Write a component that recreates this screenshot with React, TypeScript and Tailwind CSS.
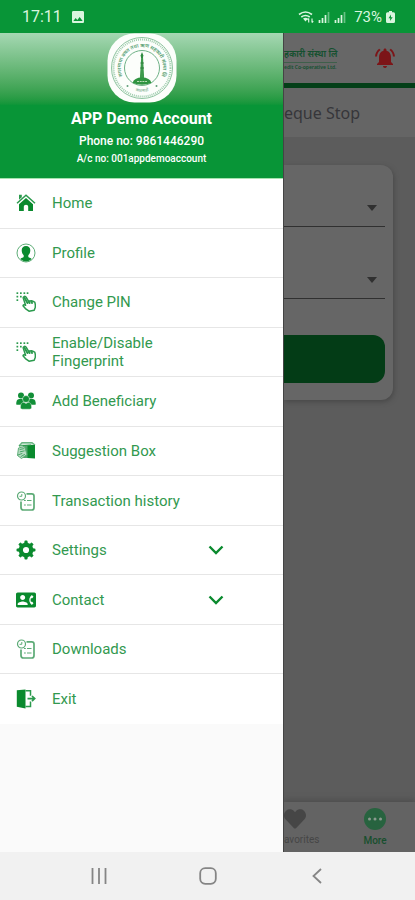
import React from 'react'
import { FaHeart } from 'react-icons/fa'
import { MdContactPhone, MdNotificationsActive, MdImage } from 'react-icons/md'

interface MenuItem {
  label: string
  icon: React.ReactNode
  expandable?: boolean
}

function HomeIcon() {
  return (
    <svg viewBox="0 0 20 20" className="size-5" fill="none">
      <path d="M1 10.200L10 2.200l9 8" stroke="#2b9a4d" strokeWidth="1.500" />
      <path d="M3 1.800h2.800v2.400L3 6.800z" fill="#2b9a4d" />
      <path d="M10 5l7 6.200V18h-4.800v-4.500q0-1.800-2.200-1.800t-2.200 1.800V18H3v-6.800z" fill="#0a8a2e" />
    </svg>
  )
}

function ProfileIcon() {
  return (
    <svg viewBox="0 0 20 20" className="size-5" fill="none">
      <circle cx="10" cy="10" r="9" stroke="#5fae78" strokeWidth="1" />
      <path
        d="M10 3c2.700 0 4.300 1.600 4.300 4.300 0 2-.8 4-2 5v1.400c.3 1 2.600 1.200 3.400 2.300A8.600 8.600 0 0 1 10 18.600a8.600 8.600 0 0 1-5.700-2.600c.8-1.100 3.100-1.300 3.400-2.300v-1.400c-1.200-1-2-3-2-5C5.700 4.600 7.300 3 10 3z"
        fill="#0a8a2e"
      />
    </svg>
  )
}

function PinIcon() {
  return (
    <svg viewBox="0 0 20 20" className="size-5" fill="none">
      {[1, 4.5, 8].map((y) =>
        [1.2, 4.7, 8.2, 11.4].map((x) =>
          (x > 8 && y > 4) || (x > 4 && y > 7) ? null : (
            <rect key={`${x}-${y}`} x={x - 0.7} y={y - 0.7} width="1.700" height="1.700" fill="#2b9a4d" />
          )
        )
      )}
      <path
        d="M8 4.600c.8-.5 1.700-.2 2.100.5l2.500 4.200 1.200-.4 1.600-.1 1.400.5 1.900.8c.7 2 .9 3.900.4 5.600l-.9 2.500-5.200 1-3.600-2.600-2.400-2.800c.2-1.100 1.400-1.300 2.600-.5L7.300 6.200c-.2-.7 0-1.300.7-1.600z"
        stroke="#2b9a4d"
        strokeWidth="1.500"
        strokeLinejoin="round"
      />
      <path d="M8.300 5.500l3.200 5.500M13 9.500l.6 1.500M15.500 9.500l.5 1.500" stroke="#2b9a4d" strokeWidth="2" strokeLinecap="round" />
    </svg>
  )
}

function PeopleIcon() {
  return (
    <svg viewBox="0 0 20 20" className="size-5" fill="#128f38">
      <circle cx="5" cy="4.500" r="3" />
      <circle cx="15" cy="4.500" r="3" />
      <path d="M.2 13.400C.2 10.200 1 8 3.200 8h3.400l1.600 2.500-2.900 3.300H1.200zM19.800 13.400c0-3.200-.8-5.400-3-5.400h-3.400l-1.600 2.500 2.900 3.300h4.100z" />
      <circle cx="10" cy="8" r="3.500" stroke="#fff" strokeWidth=".5" />
      <path d="M4.400 16.200c0-3.200 1.200-4.900 3.600-4.900l2 1.300 2-1.300c2.400 0 3.600 1.700 3.600 4.900 0 1.300-.7 2-2 2H6.400c-1.300 0-2-.7-2-2z" stroke="#fff" strokeWidth=".4" />
    </svg>
  )
}

function SuggestionIcon() {
  return (
    <svg viewBox="0 0 20 20" className="size-5" fill="none">
      <path d="M3 5l3-3.300h10L19 4" stroke="#6ab583" strokeWidth="1.400" fill="#cfe8d6" />
      <path d="M7 4h8v13H7z" fill="#4ea56a" />
      <path d="M11.500 4H19v13.500l-7.500-.5z" fill="#0a8a2e" />
      <path d="M3 5l12-1" stroke="#2b9a4d" strokeWidth="1.200" />
      <path d="M2.500 7l6-1.500 2.500 8-5.500 4-4-3z" fill="#b9ddc4" stroke="#5fae78" strokeWidth="1" strokeLinejoin="round" />
      <path d="M4 8.500l3.500-.8M4.200 10.800l4-.9M2 14l4-1.500M5 15.500l3.500-2" stroke="#3b9e5b" strokeWidth=".9" strokeLinecap="round" />
    </svg>
  )
}

function HistoryIcon() {
  return (
    <svg viewBox="0 0 20 20" className="size-5" fill="none" stroke="#5cab76">
      <circle cx="5.500" cy="5" r="4" strokeWidth="1.200" />
      <path d="M5.800 3v2.300H3.500" strokeWidth="1" />
      <path d="M10.500 2.800h5.200q2.300 0 2.300 2.300v11.400q0 2.500-2.300 2.500H7.500Q5 19 5 16.500v-6" strokeWidth="1.700" />
      <path d="M8 9.500h1.800M11 9.500h4.500M8 14h1.800M11 14h4.500" strokeWidth="1.200" />
    </svg>
  )
}

function GearIcon() {
  return (
    <svg viewBox="0 0 20 20" className="size-5" fill="none" stroke="#0a8a2e">
      <circle cx="10" cy="10" r="5.200" strokeWidth="4.200" />
      {[0, 45, 90, 135, 180, 225, 270, 315].map((angle) => (
        <path key={angle} d="M8.200 3.500L8.900.8h2.200l.7 2.700z" fill="#0a8a2e" strokeWidth=".4" transform={`rotate(${angle} 10 10)`} />
      ))}
    </svg>
  )
}

function ExitIcon() {
  return (
    <svg viewBox="0 0 20 20" className="size-5" fill="none">
      <path d="M.800 1.200L9.500.6v19L.8 17.800z" fill="#0a8a2e" />
      <path d="M9.500 1.800h5v5M9.500 17.500h5v-5" stroke="#2b9a4d" strokeWidth="1.500" />
      <path d="M11.500 9.600h6.500M16 7l2.700 2.600L16 12.200" stroke="#2b9a4d" strokeWidth="1.700" />
    </svg>
  )
}

function Chevron() {
  return (
    <svg viewBox="0 0 16 10" className="h-[10px] w-4" fill="none">
      <path d="M1.500 1.500L8 8l6.500-6.500" stroke="#0a8a2e" strokeWidth="2.400" />
    </svg>
  )
}

function Logo() {
  return (
    <svg viewBox="0 0 70 70" className="size-[70px]" fill="none" role="img" aria-label="Bank logo">
      <rect x="0.500" y="0.500" width="69" height="69" rx="27" fill="#fcfefb" />
      <circle cx="35" cy="35" r="30.500" stroke="#8fc4a0" strokeWidth="1" />
      <circle cx="35" cy="35" r="28.500" stroke="#9fcdae" strokeWidth="2" strokeDasharray="1 1" />
      <circle cx="35" cy="35" r="17.500" stroke="#6fb287" strokeWidth="1" />
      <defs>
        <path id="ring" d="M18.500 48A21 21 0 1 1 51.500 48" />
        <path id="ringBottom" d="M20 54A25.500 25.500 0 0 0 50 54" />
      </defs>
      <text fontSize="5" fontWeight="600" fill="#4f9a6c" className="font-['Noto_Sans',sans-serif]">
        <textPath href="#ring" startOffset="50%" textAnchor="middle">
          सगरमाथा बचत तथा ऋण सहकारी संस्था लि
        </textPath>
      </text>
      <text fontSize="4" fill="#5f9f78" className="font-['Noto_Sans',sans-serif]">
        <textPath href="#ringBottom" startOffset="50%" textAnchor="middle">
          काठमाडौं
        </textPath>
      </text>
      <circle cx="20.500" cy="53" r="1" fill="#5f9f78" />
      <circle cx="49.500" cy="53" r="1" fill="#5f9f78" />
      <path d="M34.200 24h1.800l1.200 22h-4.400z" fill="#3d9a4c" />
      <path d="M35 19l1.400 3.500-.6 2.500h-1.600l-.6-2.500z" fill="#2e8b40" />
      <path d="M33.500 30h3.300M33.300 35h3.700" stroke="#2e7d3b" strokeWidth="1" />
      <path d="M25.500 50q1.500-5.500 9.500-5.500t9.500 5.500q-9.500 3.500-19 0z" fill="#2f9440" />
      <path d="M30 48.500h10" stroke="#b9ddb4" strokeWidth="1" strokeDasharray="2 .7" />
    </svg>
  )
}

const menuItems: MenuItem[] = [
  { label: 'Home', icon: <HomeIcon /> },
  { label: 'Profile', icon: <ProfileIcon /> },
  { label: 'Change PIN', icon: <PinIcon /> },
  { label: 'Enable/Disable Fingerprint', icon: <PinIcon /> },
  { label: 'Add Beneficiary', icon: <PeopleIcon /> },
  { label: 'Suggestion Box', icon: <SuggestionIcon /> },
  { label: 'Transaction history', icon: <HistoryIcon /> },
  { label: 'Settings', icon: <GearIcon />, expandable: true },
  { label: 'Contact', icon: <MdContactPhone className="size-5" />, expandable: true },
  { label: 'Downloads', icon: <HistoryIcon /> },
  { label: 'Exit', icon: <ExitIcon /> },
]

function StatusBar() {
  return (
    <div className="flex h-[33px] items-center justify-between bg-[#089537] pr-5 pl-[22px] text-[#d9f5df]">
      <div className="flex items-center gap-2">
        <span className="text-base leading-5">17:11</span>
        <MdImage className="size-4" />
      </div>
      <div className="flex items-center gap-1">
        <svg viewBox="0 0 16 14" className="h-[14px] w-4" fill="none" stroke="currentColor">
          <path d="M1 4.500q6.500-5 13 0M3.300 7q4.200-3 8.400 0" strokeWidth="1.600" />
          <path d="M5 8.500q2.500-1.500 5 0L7.500 11.500z" fill="currentColor" stroke="none" />
          <path d="M10.700 12.500V8.500M9.500 9.800l1.200-1.500M14 8.500v4M15.200 11.200L14 12.700" strokeWidth="1.200" />
        </svg>
        {[0, 1].map((i) => (
          <svg key={i} viewBox="0 0 12 12" className="size-3" stroke="currentColor" strokeWidth="1.700">
            <path d="M1.500 12V9M4.500 12V7M7.500 12V4" />
            <path d="M10.500 12V1" opacity=".45" />
          </svg>
        ))}
        <span className="ml-1 text-[15px] leading-5">73%</span>
        <svg viewBox="0 0 9 12" className="h-3 w-[9px]">
          <path d="M3 0h3v1.300h1.500Q9 1.300 9 2.800v7.700Q9 12 7.500 12h-6Q0 12 0 10.500V2.800q0-1.500 1.500-1.500H3z" fill="currentColor" />
          <path d="M5 3.500L2.500 7.300h1.700L4 10l2.700-3.800H5z" fill="#089537" />
        </svg>
      </div>
    </div>
  )
}

function Drawer() {
  return (
    <aside className="flex w-[283px] shrink-0 flex-col bg-[#fafafa]">
      <header className="flex h-[146px] flex-col items-center border-b border-[#a5e3ae] bg-linear-to-b from-[#a5d8b3] to-[#089537] to-50% text-white">
        <Logo />
        <h1 className="mt-1 text-base leading-6 font-bold">APP Demo Account</h1>
        <p className="text-xs leading-5 font-medium">Phone no: 9861446290</p>
        <p className="text-[10px] leading-4 font-medium">A/c no: 001appdemoaccount</p>
      </header>
      <ul className="grid h-[545px] auto-rows-fr bg-white">
        {menuItems.map((item) => (
          <li key={item.label} className="flex border-b border-[#e6e6e6] last:border-b-0">
            <button type="button" className="flex w-full items-center pl-4 text-left text-[#0a8a2e]">
              <span className="mr-4 size-5 shrink-0">{item.icon}</span>
              <span className="w-[150px] text-[15px] leading-[18px] text-[#32994f]">{item.label}</span>
              {item.expandable && (
                <span className="ml-1.5">
                  <Chevron />
                </span>
              )}
            </button>
          </li>
        ))}
      </ul>
    </aside>
  )
}

function AccountSelect({ label }: { label: string }) {
  return (
    <div className="flex h-[38px] items-center border-b border-[#303030]">
      <select aria-label={label} className="min-w-0 flex-1 appearance-none bg-transparent" />
      <svg viewBox="0 0 10 6" className="mr-2 h-[6px] w-[10px]">
        <path d="M0 0h10L5 6z" fill="#303030" />
      </svg>
    </div>
  )
}

// page under the drawer, shown in its dimmed colours
function DimmedPage() {
  return (
    <main className="flex min-w-0 flex-1 flex-col overflow-hidden border-l border-[#444444] bg-[#5c5c5c]">
      <div className="flex h-[55px] items-center justify-between border-b-[5px] border-[#043f18] bg-[#676767] pr-[18px]">
        <div className="font-['Noto_Sans',sans-serif] font-semibold text-[#14502f]">
          <p className="border-b border-[#3f5f4b] text-[9px] leading-4 whitespace-nowrap">हकारी संस्था लि</p>
          <p className="text-[5px] leading-2 whitespace-nowrap">edit Co-operative Ltd.</p>
        </div>
        <button type="button" aria-label="Notifications" className="text-[#7c1518]">
          <MdNotificationsActive className="size-6" />
        </button>
      </div>
      <div className="flex h-[49px] items-center bg-[#656565]">
        <h2 className="font-['Noto_Sans',sans-serif] text-base text-[#36363a]">eque Stop</h2>
      </div>
      <section className="mt-7 mr-[22px] rounded-r-xl bg-[#666666] pt-6 pr-2 pb-[17px] shadow-[1px_2px_5px_#484848]">
        <AccountSelect label="From account" />
        <div className="mt-[34px]">
          <AccountSelect label="Cheque" />
        </div>
        <button type="button" aria-label="Submit" className="mt-9 block h-12 w-full rounded-r-xl bg-[#033c16]" />
      </section>
      <nav className="mt-auto flex h-[50px] items-center justify-between bg-[#636363] pr-7 text-[10px] leading-3 shadow-[0_-3px_5px_#505050]">
        <a href="#favorites" className="flex flex-col items-start gap-1 text-[#464646]">
          <FaHeart className="size-[22px]" />
          avorites
        </a>
        <a href="#more" className="flex flex-col items-center gap-1 font-medium text-[#174f2d]">
          <svg viewBox="0 0 24 24" className="size-6">
            <circle cx="12" cy="12" r="11" fill="#27633f" />
            <path d="M6.500 12h.01M12 12h.01M17.500 12h.01" stroke="#8a9a8f" strokeWidth="3" strokeLinecap="round" />
          </svg>
          More
        </a>
      </nav>
    </main>
  )
}

function SystemNav() {
  return (
    <div className="grid h-12 grid-cols-3 items-center bg-[#f1f1f1] px-11 text-[#858585]">
      <button type="button" aria-label="Recents" className="justify-self-center">
        <svg viewBox="0 0 16 16" className="size-4" stroke="currentColor" strokeWidth="1.800">
          <path d="M1.500 0v16M8 0v16M14.500 0v16" />
        </svg>
      </button>
      <button type="button" aria-label="Home screen" className="justify-self-center">
        <svg viewBox="0 0 18 18" className="size-[18px]" fill="none" stroke="currentColor" strokeWidth="1.800">
          <rect x="1.200" y="1.200" width="15.600" height="15.600" rx="5" />
        </svg>
      </button>
      <button type="button" aria-label="Back" className="justify-self-center">
        <svg viewBox="0 0 10 16" className="h-4 w-[10px]" fill="none" stroke="currentColor" strokeWidth="1.800">
          <path d="M9 1L1.500 8 9 15" />
        </svg>
      </button>
    </div>
  )
}

export default function App() {
  return (
    <div className="flex min-h-screen flex-col font-[Roboto,sans-serif]">
      <StatusBar />
      <div className="flex flex-1">
        <Drawer />
        <DimmedPage />
      </div>
      <SystemNav />
    </div>
  )
}
